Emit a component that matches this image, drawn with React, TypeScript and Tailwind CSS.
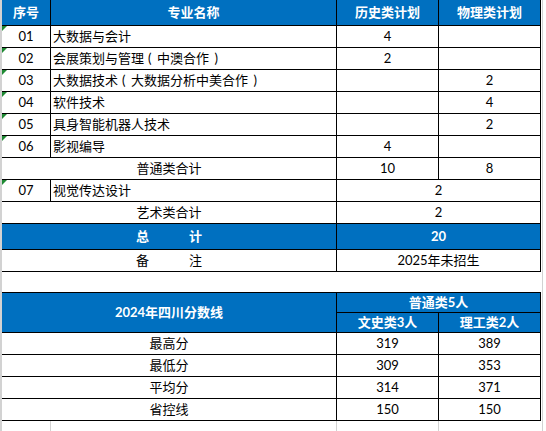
import React from "react";

const B = "border-black";
const blue = "bg-[#0070c0] text-white font-bold";

function Tri() {
  return (
    <span className="absolute left-0 top-0 w-0 h-0 border-t-[5px] border-r-[5px] border-t-[#1f8a33] border-r-transparent" />
  );
}

function Name({ text }: { text: string }) {
  const parts = text.split(/([（）])/);
  return (
    <>
      {parts.map((p, i) =>
        p === "（" ? (
          <span key={i} className="inline-block w-[13px] pl-[4px] text-left">
            (
          </span>
        ) : p === "）" ? (
          <span key={i} className="inline-block w-[13px] pr-[4px] text-right">
            )
          </span>
        ) : (
          <span key={i}>{p}</span>
        )
      )}
    </>
  );
}

type Row = { no: string; name: string; h: string; p: string };
const majors: Row[] = [
  { no: "01", name: "大数据与会计", h: "4", p: "" },
  { no: "02", name: "会展策划与管理（中澳合作）", h: "2", p: "" },
  { no: "03", name: "大数据技术（大数据分析中美合作）", h: "", p: "2" },
  { no: "04", name: "软件技术", h: "", p: "4" },
  { no: "05", name: "具身智能机器人技术", h: "", p: "2" },
  { no: "06", name: "影视编导", h: "4", p: "" },
];

const scores = [
  ["最高分", "319", "389"],
  ["最低分", "309", "353"],
  ["平均分", "314", "371"],
  ["省控线", "150", "150"],
];

export default function App() {
  const cell = `border-r border-b ${B} flex items-center justify-center h-[22px]`;
  return (
    <div
      className="w-[546px] h-[431px] bg-white overflow-hidden flex text-[13px] text-black leading-none"
      style={{ fontFamily: 'Lato, "Noto Sans CJK SC", sans-serif' }}
    >
      <div className="w-[2px] h-full bg-[#d2d2d2] shrink-0" />
      <div className="w-[539px] shrink-0 flex flex-col">
        {/* top table */}
        <div className="grid grid-cols-[49px_286px_102px_102px]">
          <div className={`${blue} border-r border-b ${B} h-[26px] flex items-center justify-center`}>序号</div>
          <div className={`${blue} border-r border-b ${B} h-[26px] flex items-center justify-center`}>专业名称</div>
          <div className={`${blue} border-r border-b ${B} h-[26px] flex items-center justify-center`}>历史类计划</div>
          <div className={`${blue} border-r border-b ${B} h-[26px] flex items-center justify-center`}>物理类计划</div>

          {majors.map((m) => (
            <React.Fragment key={m.no}>
              <div className={`${cell} relative`}>
                <Tri />
                {m.no}
              </div>
              <div className={`border-r border-b ${B} h-[22px] flex items-center pl-[2px]`}>
                <Name text={m.name} />
              </div>
              <div className={cell}>{m.h}</div>
              <div className={cell}>{m.p}</div>
            </React.Fragment>
          ))}

          <div className={`${cell} col-span-2`}>普通类合计</div>
          <div className={cell}>10</div>
          <div className={cell}>8</div>

          <div className={`${cell} relative`}>
            <Tri />
            07
          </div>
          <div className={`border-r border-b ${B} h-[22px] flex items-center pl-[2px]`}>视觉传达设计</div>
          <div className={`${cell} col-span-2`}>2</div>

          <div className={`${cell} col-span-2`}>艺术类合计</div>
          <div className={`${cell} col-span-2`}>2</div>

          <div className={`${blue} col-span-2 border-r border-b ${B} h-[26px] flex items-center justify-center gap-[40px]`}>
            <span>总</span>
            <span>计</span>
          </div>
          <div className={`${blue} col-span-2 border-r border-b ${B} h-[26px] flex items-center justify-center`}>20</div>

          <div className={`${cell} col-span-2 gap-[40px]`}>
            <span>备</span>
            <span>注</span>
          </div>
          <div className={`${cell} col-span-2`}>2025年未招生</div>
        </div>

        {/* spacer row */}
        <div className={`h-[26px] border-b ${B}`} />

        {/* bottom table */}
        <div className="grid grid-cols-[49px_286px_102px_102px] grid-rows-[20px_20px]">
          <div className={`${blue} col-span-2 row-span-2 border-r border-b ${B} flex items-center justify-center`}>
            2024年四川分数线
          </div>
          <div className={`${blue} col-span-2 border-r border-b ${B} flex items-center justify-center`}>普通类5人</div>
          <div className={`${blue} border-r border-b ${B} flex items-center justify-center`}>文史类3人</div>
          <div className={`${blue} border-r border-b ${B} flex items-center justify-center`}>理工类2人</div>
        </div>
        <div className="grid grid-cols-[49px_286px_102px_102px]">
          {scores.map((s) => (
            <React.Fragment key={s[0]}>
              <div className={`${cell} col-span-2`}>{s[0]}</div>
              <div className={cell}>{s[1]}</div>
              <div className={cell}>{s[2]}</div>
            </React.Fragment>
          ))}
          <div className="h-[10px] border-r border-[#d2d2d2]" />
          <div className="h-[10px] border-r border-[#d2d2d2]" />
          <div className="h-[10px] border-r border-[#d2d2d2]" />
          <div className="h-[10px]" />
        </div>
      </div>
      <div className="w-px h-full bg-[#d2d2d2] ml-px shrink-0" />
    </div>
  );
}
